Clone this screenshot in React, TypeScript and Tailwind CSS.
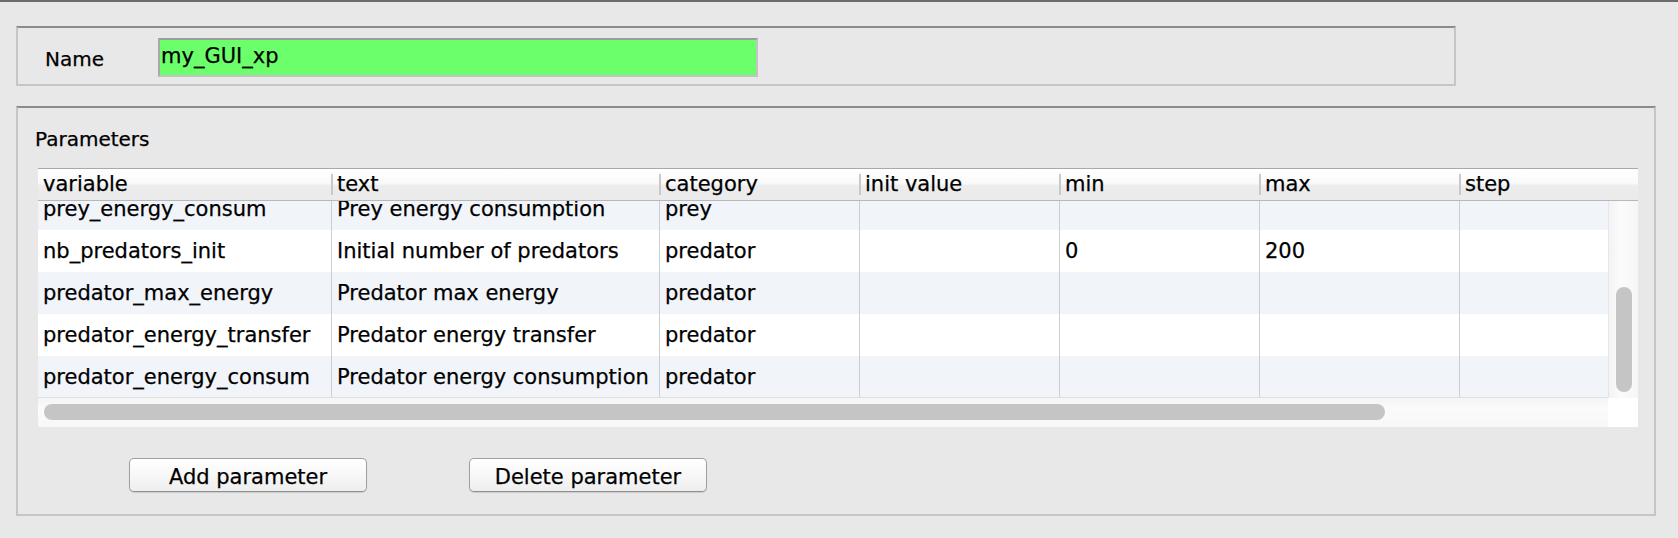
const font = "font-['DejaVu_Sans','Liberation_Sans',sans-serif] [-webkit-text-stroke:0.25px_#000]"

type Row = { variable: string; text: string; category: string; init: string; min: string; max: string; step: string }

const columns: { key: keyof Row; label: string; width: string }[] = [
  { key: 'variable', label: 'variable', width: 'w-[293px]' },
  { key: 'text', label: 'text', width: 'w-[328px]' },
  { key: 'category', label: 'category', width: 'w-[200px]' },
  { key: 'init', label: 'init value', width: 'w-[200px]' },
  { key: 'min', label: 'min', width: 'w-[200px]' },
  { key: 'max', label: 'max', width: 'w-[200px]' },
  { key: 'step', label: 'step', width: 'w-[200px]' },
]

const rows: Row[] = [
  { variable: 'prey_energy_consum', text: 'Prey energy consumption', category: 'prey', init: '', min: '', max: '', step: '' },
  { variable: 'nb_predators_init', text: 'Initial number of predators', category: 'predator', init: '', min: '0', max: '200', step: '' },
  { variable: 'predator_max_energy', text: 'Predator max energy', category: 'predator', init: '', min: '', max: '', step: '' },
  { variable: 'predator_energy_transfer', text: 'Predator energy transfer', category: 'predator', init: '', min: '', max: '', step: '' },
  { variable: 'predator_energy_consum', text: 'Predator energy consumption', category: 'predator', init: '', min: '', max: '', step: '' },
]

function Panel({ className, children }: { className: string; children: React.ReactNode }) {
  return (
    <div className={`border-2 border-[#c6c6c6] border-t-[#8b8b8b] ${className}`}>
      {children}
    </div>
  )
}

function MacButton({ label }: { label: string }) {
  return (
    <button className="w-[238px] h-[34px] shrink-0 rounded-[5px] border border-[#a0a0a0] border-b-[#8e8e8e] bg-[linear-gradient(to_bottom,#ffffff,#f7f7f7_50%,#eeeeee)] shadow-[0_1px_1px_rgba(0,0,0,0.12)] text-[21px] leading-[28px] pt-[3px] text-black text-center whitespace-nowrap">
      {label}
    </button>
  )
}

function ParamTable() {
  return (
    <div className="w-[1600px] ml-[20px] flex flex-col bg-white">
      {/* header */}
      <div className="h-[33px] border-t border-t-[#a9a9a9] border-b border-b-[#b8b8b8] bg-[linear-gradient(to_bottom,#ffffff,#fafafa_45%,#ececec_55%,#ebebeb)] flex overflow-hidden">
        {columns.map((c, i) => (
          <div key={c.key} className={`${c.width} shrink-0 flex items-center h-[31px]`}>
            {i > 0 && <div className="w-[2px] h-[21px] bg-[#c9c9c9] shrink-0" />}
            <span className={`${i > 0 ? 'pl-[4px]' : 'pl-[5px]'} leading-[31px] text-[21px] text-black whitespace-nowrap`}>{c.label}</span>
          </div>
        ))}
      </div>

      {/* body + vertical scrollbar */}
      <div className="flex h-[197px]">
        <div className="w-[1570px] h-[197px] overflow-hidden border-b border-b-[#e0e0e0]">
          <div className="-mt-[13px] flex flex-col">
            {rows.map((r, ri) => (
              <div key={r.variable} className={`flex h-[42px] ${ri % 2 === 0 ? 'bg-[#f1f5fa]' : 'bg-white'}`}>
                {columns.map((c, i) => (
                  <div
                    key={c.key}
                    className={`${c.width} shrink-0 h-[42px] ${i > 0 ? 'border-l border-l-[#cdcdcd]' : ''} pl-[5px] leading-[42px] text-[21px] text-black whitespace-nowrap overflow-hidden`}
                  >
                    {r[c.key]}
                  </div>
                ))}
              </div>
            ))}
          </div>
        </div>
        <div className="w-[30px] h-[197px] border-l border-l-[#e6e6e6] bg-[linear-gradient(to_right,#f3f3f3,#fbfbfb_40%,#f6f6f6)] flex flex-col pl-[7px] pt-[86px]">
          <div className="w-[16px] h-[105px] rounded-full bg-[#c5c5c5]" />
        </div>
      </div>

      {/* horizontal scrollbar */}
      <div className="flex h-[29px]">
        <div className="w-[1570px] h-[29px] bg-[linear-gradient(to_bottom,#f4f4f4,#fbfbfb_40%,#f7f7f7)] pt-[6px] pl-[6px]">
          <div className="w-[1341px] h-[16px] rounded-full bg-[#c5c5c5]" />
        </div>
        <div className="w-[30px] h-[29px] bg-white" />
      </div>
    </div>
  )
}

export default function App() {
  return (
    <div className={`w-[1678px] h-[538px] bg-[#e8e8e8] border-t-2 border-t-[#6c6c6c] overflow-hidden ${font}`}>
      <div className="pl-[16px] pt-[24px] flex flex-col">
        <Panel className="w-[1440px] h-[60px] flex items-start">
          <div className="w-[140px] pl-[27px] mt-[18px] text-[20px] leading-[26px] text-black">Name</div>
          <div className="mt-[10px] w-[600px] h-[39px] border-2 border-[#c3c3c3] border-t-[#9c9c9c] border-l-[#a9a9a9] bg-[#6cff6c] pl-[1px] text-[21px] leading-[32px] text-black">
            my_GUI_xp
          </div>
        </Panel>

        <Panel className="mt-[20px] w-[1640px] h-[410px] flex flex-col">
          <div className="pl-[17px] mt-[18px] mb-[16px] text-[20px] leading-[26px] text-black">Parameters</div>
          <ParamTable />
          <div className="flex gap-[102px] pl-[111px] mt-[31px]">
            <MacButton label="Add parameter" />
            <MacButton label="Delete parameter" />
          </div>
        </Panel>
      </div>
    </div>
  )
}
